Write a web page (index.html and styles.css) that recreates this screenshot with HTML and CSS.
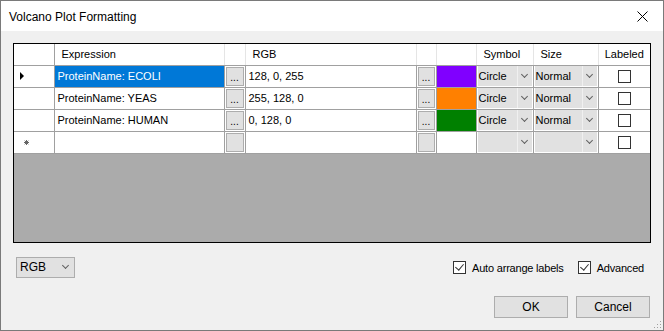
FILE: index.html
```html
<!DOCTYPE html>
<html lang="en">
<head>
    <meta charset="UTF-8">
    <title>Volcano Plot Formatting</title>
    <link rel="stylesheet" href="styles.css">
</head>
<body>
    <div class="window">
        <div class="titlebar">
            <span class="title">Volcano Plot Formatting</span>
            <svg class="close" width="11" height="11" viewBox="0 0 11 11">
                <path d="M0.5 0.5 L10.5 10.5 M10.5 0.5 L0.5 10.5" stroke="#000" stroke-width="1" fill="none"/>
            </svg>
        </div>
        <div class="client">
            <!-- Grid of formatting rows -->
            <div class="grid">
                <table class="rows">
                    <colgroup>
                        <col class="c-head"><col class="c-expr"><col class="c-btn1"><col class="c-rgb">
                        <col class="c-btn2"><col class="c-color"><col class="c-symbol"><col class="c-size"><col class="c-label">
                    </colgroup>
                    <thead>
                        <tr>
                            <th></th>
                            <th>Expression</th>
                            <th></th>
                            <th>RGB</th>
                            <th></th>
                            <th></th>
                            <th>Symbol</th>
                            <th>Size</th>
                            <th class="center">Labeled</th>
                        </tr>
                    </thead>
                    <tbody>
                        <tr>
                            <td class="rowhead"><span class="arrow"></span></td>
                            <td class="text selected">ProteinName: ECOLI</td>
                            <td class="btncell"><span class="dots">...</span></td>
                            <td class="text">128, 0, 255</td>
                            <td class="btncell"><span class="dots">...</span></td>
                            <td class="swatch purple"></td>
                            <td class="combocell"><div class="combo"><span>Circle</span><i></i></div></td>
                            <td class="combocell"><div class="combo"><span>Normal</span><i></i></div></td>
                            <td class="checkcell"><span class="box"></span></td>
                        </tr>
                        <tr>
                            <td class="rowhead"></td>
                            <td class="text">ProteinName: YEAS</td>
                            <td class="btncell"><span class="dots">...</span></td>
                            <td class="text">255, 128, 0</td>
                            <td class="btncell"><span class="dots">...</span></td>
                            <td class="swatch orange"></td>
                            <td class="combocell"><div class="combo"><span>Circle</span><i></i></div></td>
                            <td class="combocell"><div class="combo"><span>Normal</span><i></i></div></td>
                            <td class="checkcell"><span class="box"></span></td>
                        </tr>
                        <tr>
                            <td class="rowhead"></td>
                            <td class="text">ProteinName: HUMAN</td>
                            <td class="btncell"><span class="dots">...</span></td>
                            <td class="text">0, 128, 0</td>
                            <td class="btncell"><span class="dots">...</span></td>
                            <td class="swatch green"></td>
                            <td class="combocell"><div class="combo"><span>Circle</span><i></i></div></td>
                            <td class="combocell"><div class="combo"><span>Normal</span><i></i></div></td>
                            <td class="checkcell"><span class="box"></span></td>
                        </tr>
                        <tr>
                            <td class="rowhead">
                                <svg class="star" width="5" height="5" viewBox="0 0 5 5">
                                    <path d="M2.5 0 V5 M0 2.5 H5 M0.7 0.7 L4.3 4.3 M4.3 0.7 L0.7 4.3" stroke="#666" stroke-width="1"/>
                                </svg>
                            </td>
                            <td class="text"></td>
                            <td class="btncell"><span class="dots"></span></td>
                            <td class="text"></td>
                            <td class="btncell"><span class="dots"></span></td>
                            <td class="swatch"></td>
                            <td class="combocell"><div class="combo"><span></span><i></i></div></td>
                            <td class="combocell"><div class="combo"><span></span><i></i></div></td>
                            <td class="checkcell"><span class="box"></span></td>
                        </tr>
                    </tbody>
                </table>
            </div>

            <div class="options">
                <div class="select"><span>RGB</span><i></i></div>
                <div class="checks">
                    <label class="check"><span class="box checked"></span>Auto arrange labels</label>
                    <label class="check"><span class="box checked"></span>Advanced</label>
                </div>
            </div>

            <div class="buttons">
                <button class="btn">OK</button>
                <button class="btn">Cancel</button>
            </div>
        </div>
        <div class="grip"></div>
    </div>
</body>
</html>
```

FILE: styles.css
```css
html, body {
    margin: 0;
    padding: 0;
}
body {
    font-family: "Liberation Sans", Arial, sans-serif;
    font-size: 11px;
    color: #000;
}
.window {
    position: relative;
    width: 664px;
    height: 331px;
    box-sizing: border-box;
    border: 1px solid #7a7a7a;
    background: #f0f0f0;
    display: flex;
    flex-direction: column;
}
.titlebar {
    height: 30px;
    background: #fff;
    display: flex;
    align-items: center;
    justify-content: space-between;
    padding: 0 15px 0 8px;
}
.title {
    font-size: 12px;
    padding-top: 1px;
}
.close {
    display: block;
    margin-top: 1px;
}
.client {
    flex: 1;
    padding: 12px 12px 0 12px;
    display: flex;
    flex-direction: column;
}

/* data grid */
.grid {
    height: 198px;
    border: 1px solid #000;
    background: #ababab;
    overflow: hidden;
}
.rows {
    width: 636px;
    border-collapse: collapse;
    table-layout: fixed;
}
.c-head { width: 40px; }
.c-expr { width: 170px; }
.c-btn1 { width: 21px; }
.c-rgb { width: 171px; }
.c-btn2 { width: 20px; }
.c-color { width: 40px; }
.c-symbol { width: 57px; }
.c-size { width: 65px; }
.c-label { width: 52px; }
.rows thead tr {
    height: 21px;
}
.rows tbody tr {
    height: 22px;
}
.rows th {
    padding: 0 0 0 7px;
    line-height: 19px;
    font-weight: normal;
    text-align: left;
    background: #fff;
    border-right: 1px solid #e5e5e5;
    border-bottom: 1px solid #a0a0a0;
    white-space: nowrap;
}
.rows th:first-child {
    border-right: 1px solid #a0a0a0;
}
.rows th:last-child {
    border-right: none;
}
.rows th.center {
    text-align: center;
    padding: 0;
}
.rows td {
    padding: 0;
    line-height: 19px;
    background: #fff;
    border: 1px solid #a0a0a0;
    border-top: none;
    white-space: nowrap;
    overflow: hidden;
}
.rows td:first-child {
    border-left: none;
}
.rows td:last-child {
    border-right: none;
}
.rows td.text {
    padding-left: 3px;
}
.rows td.selected {
    background: #0078d7;
    color: #fff;
}
.rowhead {
    padding-left: 6px !important;
}
.arrow {
    display: block;
    width: 0;
    height: 0;
    border-top: 4px solid transparent;
    border-bottom: 4px solid transparent;
    border-left: 4px solid #000;
}
.star {
    display: block;
    margin-left: 4px;
}
.btncell {
    padding: 1px !important;
}
.dots {
    display: flex;
    align-items: flex-end;
    justify-content: center;
    box-sizing: border-box;
    height: 19px;
    background: #e1e1e1;
    border: 1px solid #adadad;
    line-height: 14px;
    font-size: 10px;
}
.swatch.purple { background: #8000ff; }
.swatch.orange { background: #ff8000; }
.swatch.green { background: #008000; }
.combocell {
    padding: 0 1px !important;
}
.combo {
    display: flex;
    height: 20px;
    background: #e1e1e1;
}
.combo span {
    flex: 1;
    line-height: 20px;
    padding-left: 1px;
    border-right: 1px solid #f0f0f0;
}
.combo i,
.select i {
    position: relative;
    width: 14px;
}
.combo i::after,
.select i::after {
    content: "";
    position: absolute;
    left: 4px;
    top: 6px;
    width: 4px;
    height: 4px;
    border-right: 1px solid #606060;
    border-bottom: 1px solid #606060;
    transform: rotate(45deg);
}
.checkcell {
    text-align: center;
}
.box {
    display: inline-block;
    box-sizing: border-box;
    width: 13px;
    height: 13px;
    border: 1px solid #333;
    background: #fff;
    vertical-align: middle;
}
.box.checked {
    position: relative;
}
.box.checked::after {
    content: "";
    position: absolute;
    left: 3px;
    top: 0;
    width: 4px;
    height: 7px;
    border-right: 1px solid #333;
    border-bottom: 1px solid #333;
    transform: rotate(40deg);
}

/* options under the grid */
.options {
    display: flex;
    justify-content: space-between;
    align-items: center;
    margin-top: 14px;
    padding: 0 7px 0 3px;
}
.select {
    display: flex;
    box-sizing: border-box;
    width: 59px;
    height: 21px;
    background: #e1e1e1;
    border: 1px solid #adadad;
}
.select span {
    flex: 1;
    line-height: 19px;
    padding-left: 3px;
    font-size: 12px;
}
.select i::after {
    left: 3px;
    top: 5px;
}
.checks {
    display: flex;
    gap: 14px;
}
.check {
    display: flex;
    align-items: center;
    gap: 6px;
    font-size: 11px;
    letter-spacing: -0.2px;
}
.buttons {
    display: flex;
    justify-content: flex-end;
    gap: 8px;
    margin-top: 18px;
    padding-right: 1px;
}
.btn {
    width: 74px;
    height: 22px;
    padding: 0;
    background: #e1e1e1;
    border: 1px solid #adadad;
    font-family: "Liberation Sans", Arial, sans-serif;
    font-size: 12px;
    color: #000;
}
.grip {
    position: absolute;
    right: 2px;
    bottom: 2px;
    width: 8px;
    height: 8px;
    background:
        radial-gradient(circle, #a0a0a0 0.8px, transparent 1px) 0 0 / 3px 3px;
    clip-path: polygon(100% 0, 100% 100%, 0 100%);
}
```
